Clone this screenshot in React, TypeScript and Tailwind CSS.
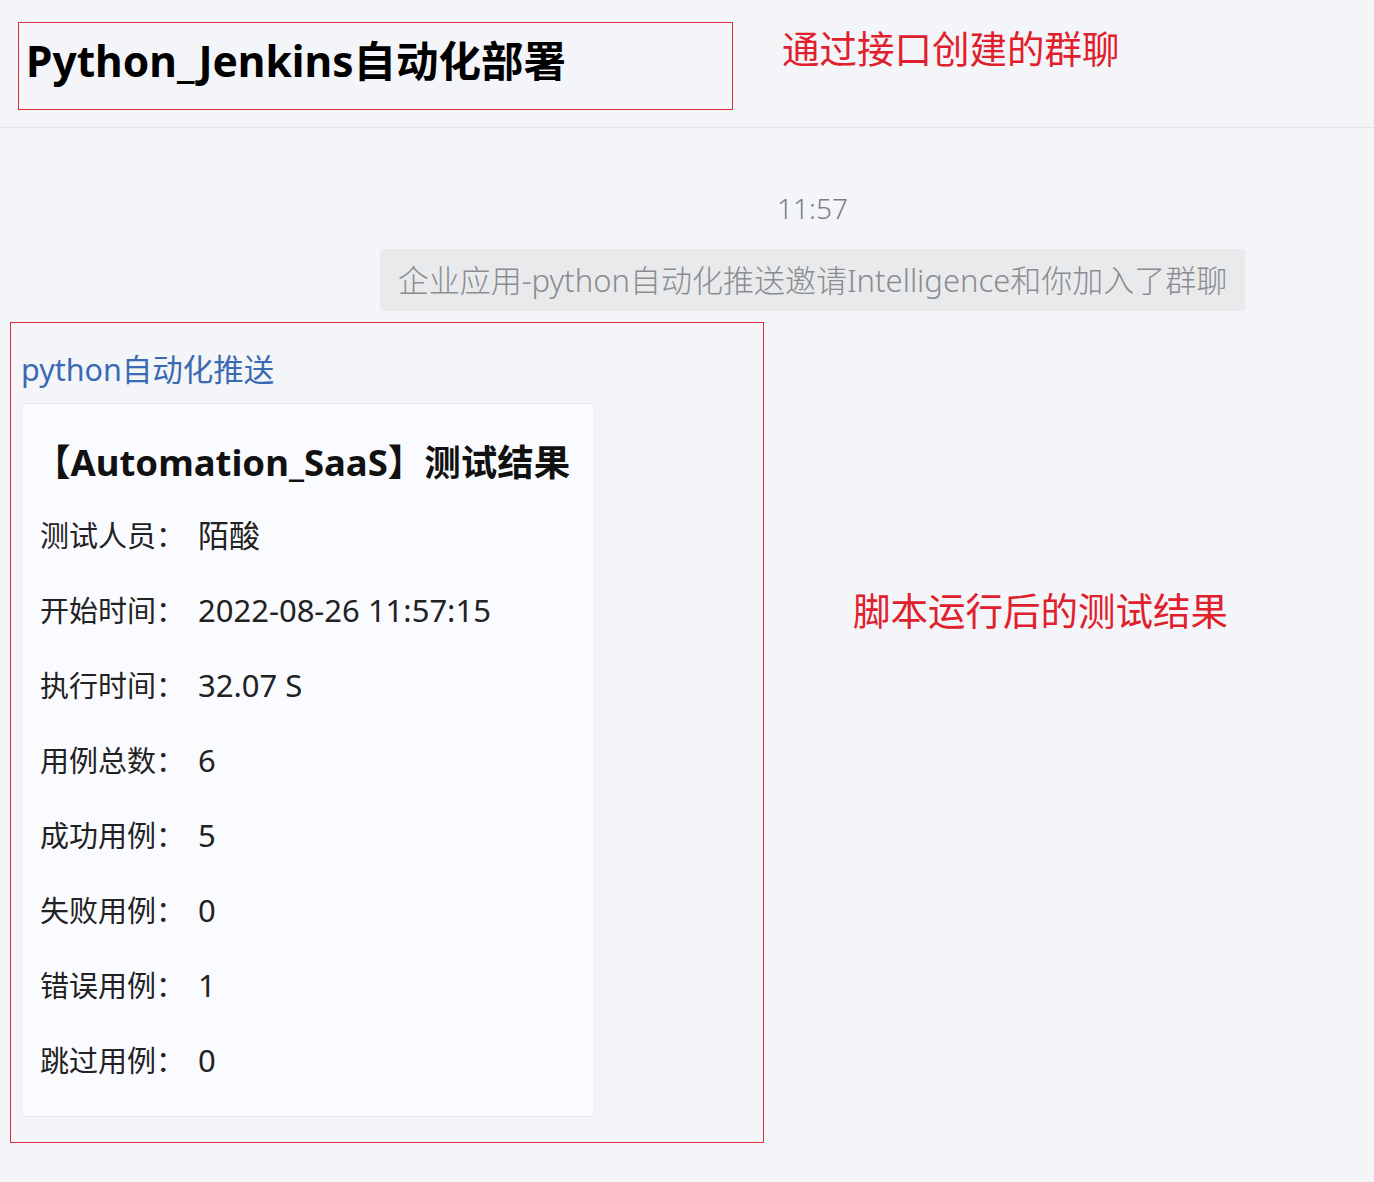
const font = { fontFamily: '"Noto Sans", "Noto Sans CJK SC", sans-serif' };

const results = [
  { label: '测试人员：', value: '陌酸' },
  { label: '开始时间：', value: '2022-08-26 11:57:15' },
  { label: '执行时间：', value: '32.07 S' },
  { label: '用例总数：', value: '6' },
  { label: '成功用例：', value: '5' },
  { label: '失败用例：', value: '0' },
  { label: '错误用例：', value: '1' },
  { label: '跳过用例：', value: '0' },
];

function ResultCard() {
  return (
    <div className="w-[574px] rounded-sm border border-[#e9eaee] bg-[#fafbfe] pl-[18px] pt-[34px] pb-[18px]">
      <h2 className="ml-[-6px] text-[36.5px] font-bold leading-[48px] text-[#111]">【Automation_SaaS】测试结果</h2>
      <div className="mt-[12px] flex flex-col">
        {results.map((row) => (
          <div key={row.label} className="flex h-[75px] items-center text-[#222]">
            <span className="w-[158px] shrink-0 text-[29px]">{row.label}</span>
            <span className="text-[31px]">{row.value}</span>
          </div>
        ))}
      </div>
    </div>
  );
}

export default function App() {
  return (
    <div className="min-h-[1182px] w-[1374px] bg-[#f4f5f8]" style={font}>
      <header className="flex h-[128px] items-start border-b border-[#e3e4e7] pt-[22px]">
        <div className="ml-[18px] flex h-[88px] w-[715px] items-center border border-[#d6303a] pb-[10px] pl-[7px]">
          <h1 className="text-[42.5px] font-bold leading-none text-black">Python_Jenkins自动化部署</h1>
        </div>
        <p className="ml-[49px] mt-[3px] text-[37.5px] leading-[48px] text-[#e0202c]">通过接口创建的群聊</p>
      </header>

      <div className="ml-[380px] mt-[60px] flex w-[865px] flex-col items-center">
        <span className="text-[28px] font-light leading-[40px] text-[#7d7f84]">11:57</span>
        <div className="mt-[21px] flex h-[62px] w-full items-center justify-center rounded-sm bg-[#e9eaec] text-[31px] font-light text-[#8a8c90]">
          企业应用-python自动化推送邀请Intelligence和你加入了群聊
        </div>
      </div>

      <div className="mt-[11px] flex items-start">
        <div className="ml-[10px] w-[754px] border border-[#d6303a] pl-[10px] pt-[26px] pb-[25px]">
          <p className="text-[30.5px] leading-[40px] text-[#3a6ab4]">python自动化推送</p>
          <div className="mt-[14px]">
            <ResultCard />
          </div>
        </div>
        <p className="ml-[89px] mt-[265px] text-[37.5px] leading-[48px] text-[#e0202c]">脚本运行后的测试结果</p>
      </div>
    </div>
  );
}
